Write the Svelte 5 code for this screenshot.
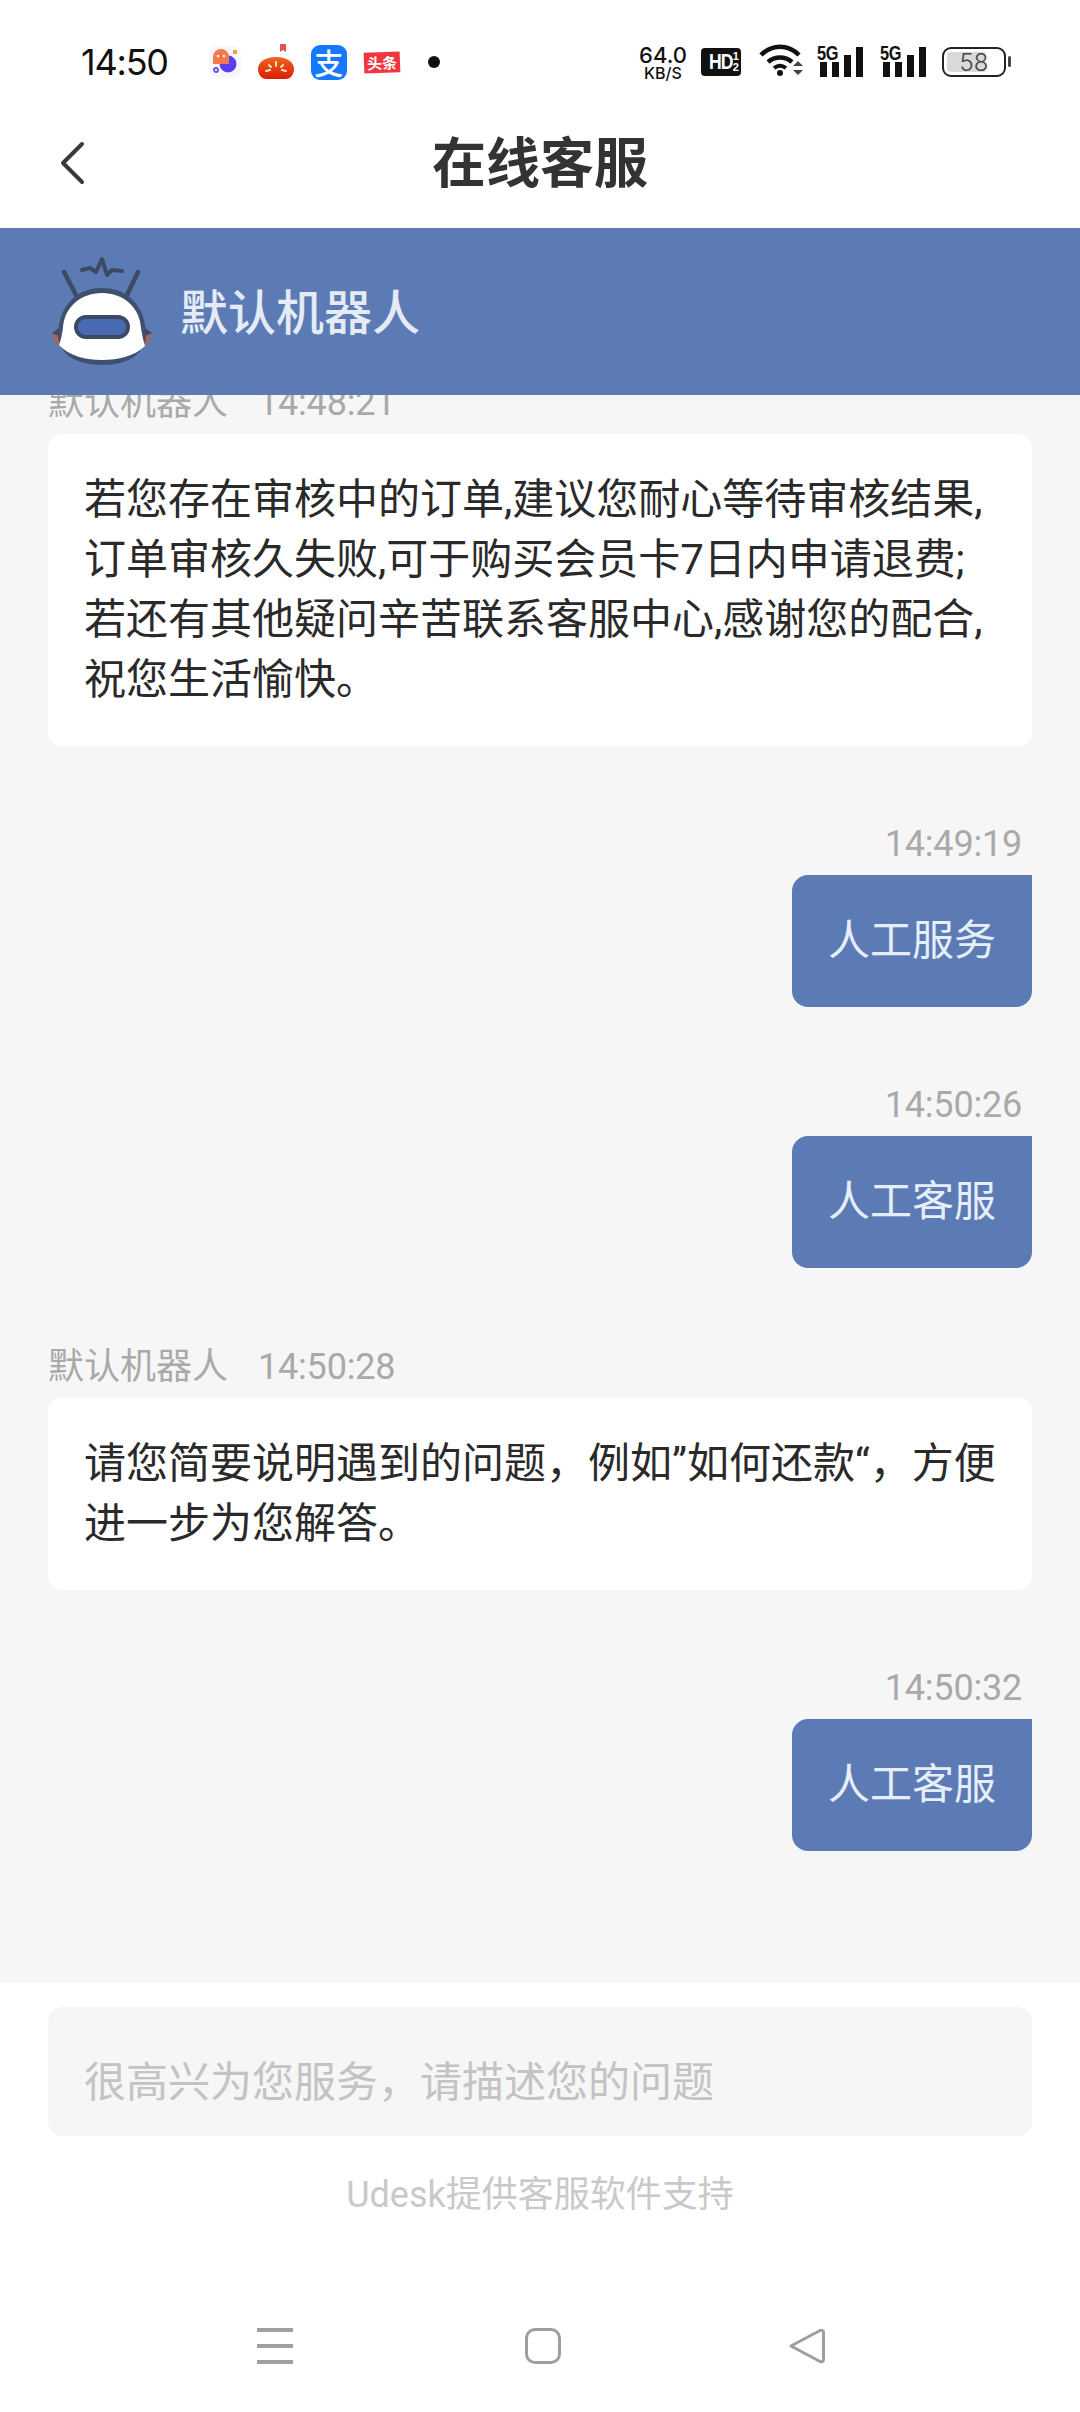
<script>
  const messages = [
    { side: 'bot', name: '默认机器人', time: '14:48:21', lines: ['若您存在审核中的订单,建议您耐心等待审核结果,', '订单审核久失败,可于购买会员卡7日内申请退费;', '若还有其他疑问辛苦联系客服中心,感谢您的配合,', '祝您生活愉快。'] },
    { side: 'me', time: '14:49:19', lines: ['人工服务'] },
    { side: 'me', time: '14:50:26', lines: ['人工客服'] },
    { side: 'bot', name: '默认机器人', time: '14:50:28', lines: ['请您简要说明遇到的问题，例如”如何还款“，方便', '进一步为您解答。'] },
    { side: 'me', time: '14:50:32', lines: ['人工客服'] }
  ];
</script>

<div class="phone">
  <div class="status">
    <span class="clock">14:50</span>
    <div class="notif">
      <svg class="ni" width="32" height="34" viewBox="0 0 32 34">
        <rect x="0" y="1" width="32" height="32" rx="8" fill="#f7f7fb"/>
        <circle cx="19" cy="19" r="8.500" fill="#5b3df0"/>
        <path d="M4 19V12a8 8 0 0 1 16 0v7z" fill="#f5794a"/>
        <circle cx="9" cy="11" r="1.200" fill="#fff"/><circle cx="15" cy="11" r="1.200" fill="#fff"/>
        <rect x="24" y="5" width="4" height="4" fill="#eda23c"/>
        <circle cx="7" cy="25" r="2" fill="#fff" stroke="#6a4af0" stroke-width="1.800"/>
      </svg>
      <svg class="ni" width="36" height="36" viewBox="0 0 36 36">
        <defs><linearGradient id="tg" x1="0" y1="0" x2="0" y2="1"><stop offset="0" stop-color="#f2641c"/><stop offset="1" stop-color="#d81e06"/></linearGradient></defs>
        <path d="M22 0h6v8l-3-2-3 2z" fill="#e8504a"/>
        <path d="M18 13c11 0 18 5 18 12 0 6-4 10-8 10H8c-4 0-8-4-8-10 0-7 7-12 18-12z" fill="url(#tg)"/>
        <path d="M18 18v4M8 27l4-1M28 27l-4-1M11 21l2 2M25 21l-2 2" stroke="#ffe2c4" stroke-width="2" stroke-linecap="round"/>
      </svg>
      <div class="alipay">支</div>
      <div class="toutiao">头条</div>
      <div class="dot"></div>
    </div>
    <div class="sys">
      <div class="speed"><span>64.0</span><span class="kb">KB/S</span></div>
      <div class="hd"><b>HD</b><span class="frac"><i>1</i><i>2</i></span></div>
      <svg class="wifi" width="46" height="34" viewBox="0 0 46 34" fill="none">
        <path d="M2 12C13 1 29 1 40 12" stroke="#111" stroke-width="4.500"/>
        <path d="M9 19c7-6 17-6 24 0" stroke="#111" stroke-width="4.500"/>
        <path d="M15 25c4-3 8-3 12 0" stroke="#111" stroke-width="4"/>
        <circle cx="21" cy="30" r="3" fill="#111"/>
        <path d="M34 23l5-5 5 5zM34 27l5 5 5-5z" fill="#444"/>
      </svg>
      {#each [0, 1] as s}
        <div class="sig">
          <span class="fiveg">5G</span>
          <svg width="46" height="30" viewBox="0 0 46 30"><rect x="3" y="15" width="7" height="15" fill="#111"/><rect x="15" y="15" width="7" height="15" fill="#111"/><rect x="27" y="8" width="7" height="22" fill="#111"/><rect x="39" y="0" width="7" height="30" fill="#111"/></svg>
        </div>
      {/each}
      <div class="battery"><div class="fill"></div><span>58</span><div class="nub"></div></div>
    </div>
  </div>

  <div class="titlebar">
    <svg class="back" width="26" height="44" viewBox="0 0 26 44" fill="none"><path d="M23 3L4 22l19 19" stroke="#3a3a3a" stroke-width="4" stroke-linecap="round" stroke-linejoin="round"/></svg>
    <h1>在线客服</h1>
  </div>

  <div class="agentbar">
    <svg class="robot" width="104" height="112" viewBox="0 0 104 112" fill="none">
      <path d="M14 16l12 23M88 16L77 39" stroke="#3c4a63" stroke-width="4.500" stroke-linecap="round"/>
      <path d="M32 14l8-2 6 4 6-13 5 16 5-5 10 1" stroke="#3c4a63" stroke-width="4" stroke-linecap="round" stroke-linejoin="round"/>
      <path d="M2 77l7-5v18l-3-2zM102 77l-7-5v18l3-2z" fill="#a9635c"/>
      <path d="M2 77l7-5v8z M102 77l-7-5v8z" fill="#3c4a63"/>
      <path d="M52 32C26 32 9 50 8 78c0 20 18 31 44 31s44-11 44-31C95 50 78 32 52 32z" fill="#3f4f6e"/>
      <path d="M52 37C30 37 14 52 13 72c-1 6-2 12-4 17 10 11 27 15 43 15s33-4 43-14c-2-6-3-12-4-18C90 52 74 37 52 37z" fill="#fff"/>
      <rect x="26" y="61" width="52" height="20" rx="10" fill="#4a6ab3" stroke="#3c4a63" stroke-width="4"/>
    </svg>
    <span class="agent">默认机器人</span>
  </div>

  <div class="list">
    {#each messages as m}
      <div class="msg {m.side}">
        <div class="meta">
          {#if m.name}<span class="name">{m.name}</span>{/if}
          <span>{m.time}</span>
        </div>
        <div class="bubble">
          {#each m.lines as line}<div>{line}</div>{/each}
        </div>
      </div>
    {/each}
  </div>

  <div class="footer">
    <div class="input">很高兴为您服务，请描述您的问题</div>
    <div class="credit">Udesk提供客服软件支持</div>
    <div class="nav">
      <div class="menu"><i></i><i></i><i></i></div>
      <div class="home"></div>
      <svg width="38" height="36" viewBox="0 0 38 36" fill="none"><path d="M3 18L32 2.500c1.500-.8 3.500 0 3.500 2v27c0 2-2 2.800-3.500 2z" stroke="#9e9e9e" stroke-width="3" stroke-linejoin="round"/></svg>
    </div>
  </div>
</div>

<style>
  :global(body) { margin: 0; background: #fff; }
  .phone {
    width: 1080px; height: 2412px; display: flex; flex-direction: column; overflow: hidden;
    background: #f6f6f6; font-family: "Noto Sans CJK SC", Roboto, sans-serif;
  }
  .status {
    height: 104px; box-sizing: border-box; background: #fff; display: flex; align-items: center;
    padding: 20px 71px 0 81px; flex: none;
  }
  .clock { font: 400 36px Inter, Roboto, sans-serif; color: #111; letter-spacing: -1.2px; }
  .notif { display: flex; align-items: center; gap: 17px; margin-left: 41px; flex: 1; }
  .ni { display: block; }
  .alipay {
    width: 36px; height: 35px; border-radius: 9px; background: #1677ff; color: #fff;
    font-size: 29px; line-height: 34px; text-align: center; font-weight: 500;
  }
  .toutiao {
    width: 36px; height: 21px; background: #f0373f; color: #fff; font-size: 15px; line-height: 21px;
    text-align: center; font-weight: 700; transform: rotate(-2deg); white-space: nowrap; overflow: hidden;
  }
  .dot { width: 12px; height: 12px; border-radius: 50%; background: #111; margin-left: 11px; }
  .sys { display: flex; align-items: center; color: #111; }
  .speed {
    display: flex; flex-direction: column; align-items: center; font: 500 22px/22px Inter, Roboto, sans-serif; width: 52px; margin-right: 12px;
  }
  .kb { font-size: 16px; line-height: 15px; }
  .hd {
    width: 40px; height: 28px; border-radius: 4px; background: #111; color: #fff; display: flex; align-items: center; justify-content: center;
    font-family: "Liberation Sans", sans-serif; margin-right: 18px; overflow: hidden;
  }
  .hd b { font-size: 22px; line-height: 22px; letter-spacing: -1px; transform: scaleX(.8); transform-origin: right; }
  .frac { display: flex; flex-direction: column; font-size: 11px; line-height: 11px; font-weight: 700; }
  .frac i { font-style: normal; }
  .wifi { display: block; margin-top: -4px; }
  .sig { position: relative; width: 46px; height: 30px; margin-left: 12px; }
  .sig svg { display: block; }
  .sig + .sig { margin-left: 17px; }
  .fiveg {
    position: absolute; left: 0; top: -5px; font: 700 21px/21px "Liberation Sans", sans-serif; color: #111;
    transform: scaleX(.78); transform-origin: left; letter-spacing: -.5px;
  }
  .battery {
    position: relative; width: 64px; height: 30px; box-sizing: border-box; border: 2.500px solid #222; border-radius: 9px; margin-left: 16px; margin-right: 3px;
    display: flex; align-items: center; justify-content: center; font: 300 24px Inter, Roboto, sans-serif; color: #444;
  }
  .battery span { position: relative; }
  .fill { position: absolute; left: 3px; top: 3px; bottom: 3px; width: 38px; background: #d9d9d9; border-radius: 4px 0 0 4px; }
  .nub { position: absolute; right: -7px; top: 7px; width: 3px; height: 11px; background: #444; border-radius: 2px; }

  .titlebar {
    position: relative; height: 124px; background: #fff; display: flex; align-items: center; justify-content: center; flex: none;
  }
  .back { position: absolute; left: 59px; top: 37px; }
  h1 { margin: 0 0 12px; font-size: 54px; font-weight: 700; color: #333; line-height: 76px; }

  .agentbar {
    height: 167px; background: #5c7bb5; display: flex; align-items: center; padding-left: 50px; flex: none; gap: 26px;
  }
  .robot { display: block; align-self: flex-start; margin-top: 28px; }
  .agent { font-size: 48px; font-weight: 500; color: #e4ebf5; line-height: 60px; margin-bottom: 6px; }

  .list {
    flex: 1; min-height: 0; overflow: hidden; display: flex; flex-direction: column; justify-content: flex-end;
    padding: 0 48px 132px;
  }
  .msg { display: flex; flex-direction: column; flex: none; margin-top: 75px; }
  .msg.bot { margin-top: 76px; }
  .msg.me { align-items: flex-end; }
  .meta {
    font: 400 36px/46px Roboto, "Noto Sans CJK SC", sans-serif; color: #a9a9a9; height: 46px; display: flex; gap: 30px;
    margin-bottom: 8px; letter-spacing: -.2px;
  }
  .me .meta { padding-right: 10px; }
  .name { letter-spacing: 0; }
  .bubble {
    font-family: Roboto, "Noto Sans CJK SC", sans-serif; font-size: 42px; line-height: 60px; padding: 36px; border-radius: 14px;
    background: #fff; color: #2a2a2a; white-space: nowrap;
  }
  .bot .bubble { width: 984px; box-sizing: border-box; }
  .me .bubble { background: #5c7bb5; color: #e6eefa; border-radius: 16px 0 16px 16px; }

  .footer { background: #fff; flex: none; height: 429px; box-sizing: border-box; padding: 24px 48px 0; display: flex; flex-direction: column; align-items: stretch; }
  .input {
    height: 129px; border-radius: 14px; background: #f6f6f6; box-sizing: border-box; padding: 13px 0 0 36px; display: flex; align-items: center;
    font-size: 42px; color: #c3c3c3;
  }
  .credit { text-align: center; margin-top: 37px; font: 400 36px/44px Roboto, "Noto Sans CJK SC", sans-serif; color: #c9c9c9; }
  .nav { display: flex; justify-content: space-between; align-items: center; margin: 111px 0 0; height: 36px; padding: 0 206px 0 209px; }
  .menu { width: 36px; height: 36px; display: flex; flex-direction: column; justify-content: space-between; }
  .menu i { display: block; height: 4px; background: #a0a0a0; }
  .home { width: 36px; height: 36px; box-sizing: border-box; border: 3px solid #9e9e9e; border-radius: 10px; margin-left: 4px; }
</style>
